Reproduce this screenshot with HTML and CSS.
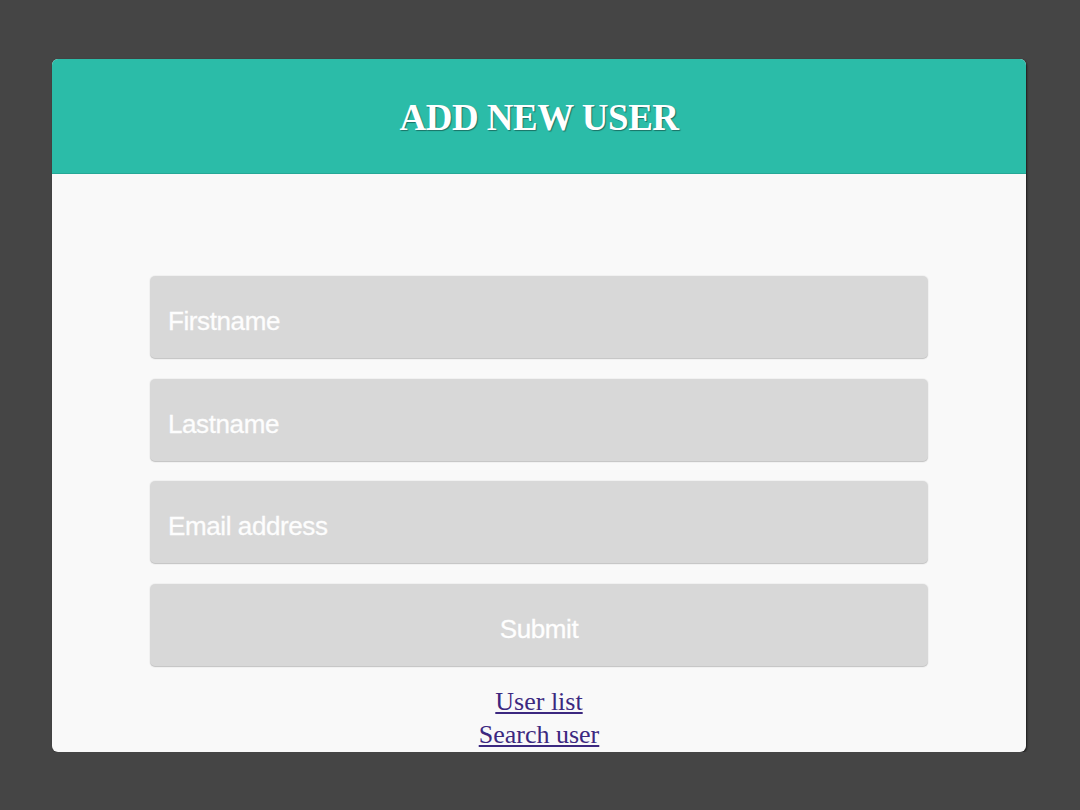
FILE: index.html
```html
<!DOCTYPE html>
<html>
<head>
<meta charset="utf-8">
<link rel="stylesheet" href="styles.css">
</head>
<body>
<div class="card">
  <div class="card-header"><h1>ADD NEW USER</h1></div>
  <form class="form">
    <input class="field" type="text" placeholder="Firstname">
    <input class="field" type="text" placeholder="Lastname">
    <input class="field" type="text" placeholder="Email address">
    <button class="field submit" type="button">Submit</button>
  </form>
  <div class="links">
    <a href="#">User list</a>
    <a href="#">Search user</a>
  </div>
</div>
</body>
</html>
```
FILE: styles.css
```css
html, body {
  margin: 0;
  padding: 0;
  background: #454545;
}
body {
  padding-top: 59px;
}
.card {
  width: 974px;
  margin-left: 52px;
  background: #f9f9f9;
  border-radius: 6px;
  overflow: hidden;
  box-shadow: 1px 1px 2px rgba(0,0,0,0.6);
  height: 693px;
  display: flex;
  flex-direction: column;
}
.card-header {
  background: #2bbca8;
  height: 115px;
  display: flex;
  align-items: center;
  justify-content: center;
  border-bottom: 1px solid #25a896;
  box-sizing: border-box;
}
.card-header h1 {
  margin: 0;
  color: #fff;
  font-family: "Liberation Serif", "Times New Roman", serif;
  font-weight: bold;
  font-size: 37px;
  letter-spacing: -0.5px;
  text-shadow: 1px 1px 1px rgba(0,0,0,0.4);
  padding-top: 2px;
}
.form {
  margin: 102px 0 0 98px;
  width: 778px;
  display: flex;
  flex-direction: column;
  gap: 19.7px;
}
.field {
  height: 83px;
  box-sizing: border-box;
  border: none;
  border-radius: 5px;
  background: #d8d8d8;
  box-shadow: inset 0 -1px 0 rgba(0,0,0,0.08), 0 0 0 1px rgba(0,0,0,0.03);
  padding: 8px 18px 0;
  font-family: "Liberation Sans", Arial, sans-serif;
  font-size: 26px;
  color: #fff;
  outline: none;
  letter-spacing: -0.4px;
  -webkit-text-stroke: 0.3px #fdfdfd;
}
.field::placeholder {
  color: #fdfdfd;
  opacity: 1;
}
.submit {
  text-align: center;
  cursor: pointer;
}
.links {
  margin-top: 18px;
  display: flex;
  flex-direction: column;
  align-items: center;
  font-family: "Liberation Serif", "Times New Roman", serif;
  font-size: 26px;
  line-height: 33px;
}
.links a {
  color: #3c2880;
}
```
